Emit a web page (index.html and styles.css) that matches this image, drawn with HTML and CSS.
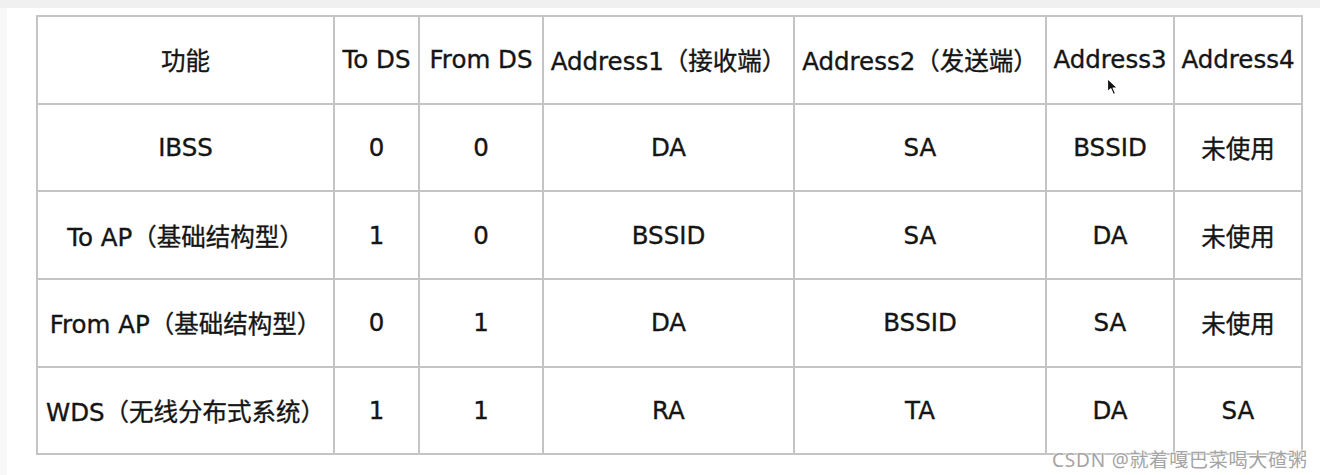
FILE: index.html
```html
<!DOCTYPE html>
<html lang="zh">
<head>
<meta charset="utf-8">
<link rel="stylesheet" href="styles.css">
</head>
<body>
<div class="topband"></div>
<div class="page">
  <div class="leftstrip"></div>
  <div class="content">
    <table class="grid">
      <colgroup>
        <col class="c1"><col class="c2"><col class="c3"><col class="c4"><col class="c5"><col class="c6"><col class="c7">
      </colgroup>
      <tr><td>功能</td><td>To DS</td><td>From DS</td><td>Address1（接收端）</td><td>Address2（发送端）</td><td class="cursor-cell">Address3<svg class="cursor" width="14" height="20" viewBox="0 0 14 20"><path d="M1.5 1.5 L1.5 15 L4.8 11.8 L7.4 17.6 L9.6 16.6 L7.1 11 L11.6 11 Z" fill="#111" stroke="#fff" stroke-width="1.2" stroke-linejoin="round"/></svg></td><td>Address4</td></tr>
      <tr><td>IBSS</td><td>0</td><td>0</td><td>DA</td><td>SA</td><td>BSSID</td><td>未使用</td></tr>
      <tr><td>To AP（基础结构型）</td><td>1</td><td>0</td><td>BSSID</td><td>SA</td><td>DA</td><td>未使用</td></tr>
      <tr><td>From AP（基础结构型）</td><td>0</td><td>1</td><td>DA</td><td>BSSID</td><td>SA</td><td>未使用</td></tr>
      <tr><td>WDS（无线分布式系统）</td><td>1</td><td>1</td><td>RA</td><td>TA</td><td>DA</td><td>SA</td></tr>
    </table>
    <div class="watermark">CSDN @就着嘎巴菜喝大碴粥</div>
  </div>
</div>
</body>
</html>
```

FILE: styles.css
```css
html, body {
  margin: 0;
  padding: 0;
  background: #ffffff;
  width: 1320px;
  height: 475px;
  overflow: hidden;
}
.topband {
  height: 8px;
  background: #f0f0f0;
}
.page {
  display: flex;
  height: 467px;
}
.leftstrip {
  width: 7px;
  background: #f8f8f8;
}
.content {
  position: relative;
  flex: 1;
  padding: 7px 0 0 29px;
}
.grid {
  border-collapse: collapse;
  table-layout: fixed;
  width: 1267px;
  font-family: "DejaVu Sans", "Noto Sans CJK SC", sans-serif;
  font-size: 24.5px;
  color: #151515;
  -webkit-text-stroke: 0.35px #151515;
}
.grid td {
  border: 2px solid #c4c4c4;
  height: 85.7px;
  padding: 0;
  text-align: center;
  vertical-align: middle;
  white-space: nowrap;
  overflow: visible;
}
.c1 { width: 297px; }
.c2 { width: 85px; }
.c3 { width: 124px; }
.c4 { width: 251px; }
.c5 { width: 252px; }
.c6 { width: 128px; }
.c7 { width: 128px; }
.cursor-cell {
  position: relative;
}
.cursor {
  position: absolute;
  left: 59px;
  top: 60px;
}
.watermark {
  position: absolute;
  left: 1045px;
  top: 437px;
  font-family: "Noto Sans", "Noto Sans CJK SC", sans-serif;
  font-size: 19px;
  letter-spacing: 0.8px;
  color: #a4a4a4;
  white-space: nowrap;
  text-shadow: 0 0 2px #fff, 0 0 2px #fff, 0 0 1px #fff;
}
```
